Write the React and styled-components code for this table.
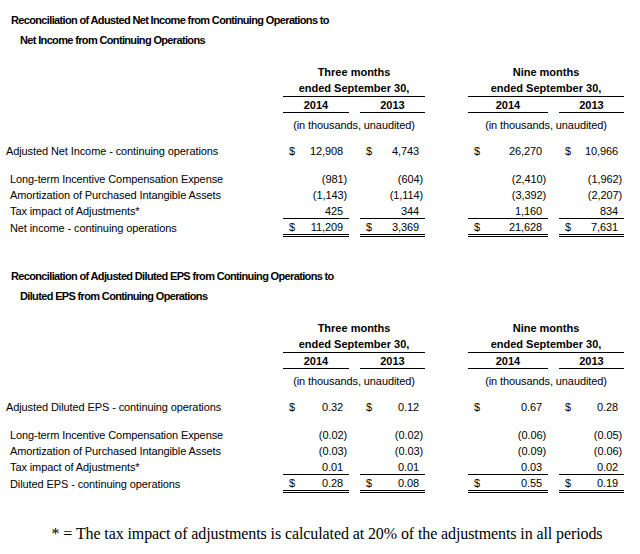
import React from 'react'
import styled, { createGlobalStyle } from 'styled-components'

const COLS = '283px 66px 11px 65px 43px 80px 11px 65px'
const VALUE_COLS = [2, 4, 6, 8]

const GlobalStyle = createGlobalStyle`
  body {
    margin: 0;
    background: #fff;
    color: #000;
    font-family: "Liberation Sans", Arial, sans-serif;
  }
`

const incomeTable = {
  title: ['Reconciliation of Adusted Net Income from Continuing Operations to', 'Net Income from Continuing Operations'],
  adjusted: ['Adjusted Net Income - continuing operations', ['12,908', '4,743', '26,270', '10,966']],
  items: [
    ['Long-term Incentive Compensation Expense', ['(981)', '(604)', '(2,410)', '(1,962)']],
    ['Amortization of Purchased Intangible Assets', ['(1,143)', '(1,114)', '(3,392)', '(2,207)']],
    ['Tax impact of Adjustments*', ['425', '344', '1,160', '834']],
  ],
  total: ['Net income - continuing operations', ['11,209', '3,369', '21,628', '7,631']],
}

const epsTable = {
  title: ['Reconciliation of Adjusted Diluted EPS from Continuing Operations to', 'Diluted EPS from Continuing Operations'],
  adjusted: ['Adjusted Diluted EPS - continuing operations', ['0.32', '0.12', '0.67', '0.28']],
  items: [
    ['Long-term Incentive Compensation Expense', ['(0.02)', '(0.02)', '(0.06)', '(0.05)']],
    ['Amortization of Purchased Intangible Assets', ['(0.03)', '(0.03)', '(0.09)', '(0.06)']],
    ['Tax impact of Adjustments*', ['0.01', '0.01', '0.03', '0.02']],
  ],
  total: ['Diluted EPS - continuing operations', ['0.28', '0.08', '0.55', '0.19']],
}

function Section({ data, first }) {
  const [adjLabel, adjValues] = data.adjusted
  const [totalLabel, totalValues] = data.total
  return (
    <Block $first={first}>
      <Title>
        <TitleLine $indent={11}>{data.title[0]}</TitleLine>
        <TitleLine $indent={20}>{data.title[1]}</TitleLine>
      </Title>

      <Row $h={16} $mt={14}>
        <Heading $col="2 / 5">Three months</Heading>
        <Heading $col="6 / 9">Nine months</Heading>
      </Row>
      <Row $h={17}>
        <Heading $col="2 / 5" $ruled>ended September 30,</Heading>
        <Heading $col="6 / 9" $ruled>ended September 30,</Heading>
      </Row>
      <Row $h={16}>
        {['2014', '2013', '2014', '2013'].map((y, i) => (
          <Heading key={i} $col={VALUE_COLS[i]} $ruled>{y}</Heading>
        ))}
      </Row>
      <Row $h={16} $mt={4}>
        <Note $col="2 / 5">(in thousands, unaudited)</Note>
        <Note $col="6 / 9">(in thousands, unaudited)</Note>
      </Row>

      <Row $h={16} $mt={10}>
        <Label $indent={6}>{adjLabel}</Label>
        {adjValues.map((v, i) => (
          <Amount key={i} col={VALUE_COLS[i]} value={v} dollar />
        ))}
      </Row>

      {data.items.map(([label, values], r) => (
        <Row key={label} $h={16} $mt={r === 0 ? 12 : 0}>
          <Label $indent={10}>{label}</Label>
          {values.map((v, i) => (
            <Amount key={i} col={VALUE_COLS[i]} value={v} rule={r === data.items.length - 1 ? 'single' : null} />
          ))}
        </Row>
      ))}

      <Row $h={18}>
        <Label $indent={10}>{totalLabel}</Label>
        {totalValues.map((v, i) => (
          <Amount key={i} col={VALUE_COLS[i]} value={v} dollar rule="double" />
        ))}
      </Row>
    </Block>
  )
}

function Amount({ col, value, dollar, rule }) {
  const neg = value.startsWith('(')
  return (
    <Cell $col={col} $rule={rule}>
      <Dollar>{dollar ? '$' : ''}</Dollar>
      <Num $neg={neg}>{value}</Num>
    </Cell>
  )
}

function App() {
  return (
    <Page>
      <GlobalStyle />
      <Section data={incomeTable} first />
      <Section data={epsTable} />
      <Footnote>* = The tax impact of adjustments is calculated at 20% of the adjustments in all periods</Footnote>
    </Page>
  )
}

const Page = styled.div`
  width: 640px;
  padding-top: 10px;
`

const Block = styled.section`
  margin-top: ${p => (p.$first ? 0 : 29)}px;
`

const Title = styled.div`
  font-size: 11px;
  font-weight: bold;
  letter-spacing: -0.65px;
  line-height: 20px;
`

const TitleLine = styled.div`
  padding-left: ${p => p.$indent}px;
  white-space: nowrap;
`

const Row = styled.div`
  display: grid;
  grid-template-columns: ${COLS};
  height: ${p => p.$h}px;
  margin-top: ${p => p.$mt || 0}px;
  font-size: 11px;
  letter-spacing: -0.1px;
`

const Heading = styled.div`
  grid-column: ${p => p.$col};
  display: flex;
  align-items: center;
  justify-content: center;
  font-weight: bold;
  letter-spacing: 0;
  border-bottom: ${p => (p.$ruled ? '1px solid #000' : 'none')};
`

const Note = styled.div`
  grid-column: ${p => p.$col};
  display: flex;
  align-items: center;
  justify-content: center;
`

const Label = styled.div`
  grid-column: 1;
  display: flex;
  align-items: center;
  padding-left: ${p => p.$indent}px;
  white-space: nowrap;
`

const Cell = styled.div`
  grid-column: ${p => p.$col};
  display: flex;
  align-items: center;
  justify-content: space-between;
  border-bottom: ${p =>
    p.$rule === 'double' ? '3px double #000' : p.$rule === 'single' ? '1px solid #000' : 'none'};
`

const Dollar = styled.span`
  padding-left: 6px;
`

const Num = styled.span`
  padding-right: ${p => (p.$neg ? 2 : 6)}px;
`

const Footnote = styled.p`
  margin: 32px 0 0;
  padding-left: 14px;
  text-align: center;
  font-family: "Liberation Serif", "Times New Roman", serif;
  font-size: 16px;
  letter-spacing: -0.1px;
  line-height: 18px;
`

export default App
